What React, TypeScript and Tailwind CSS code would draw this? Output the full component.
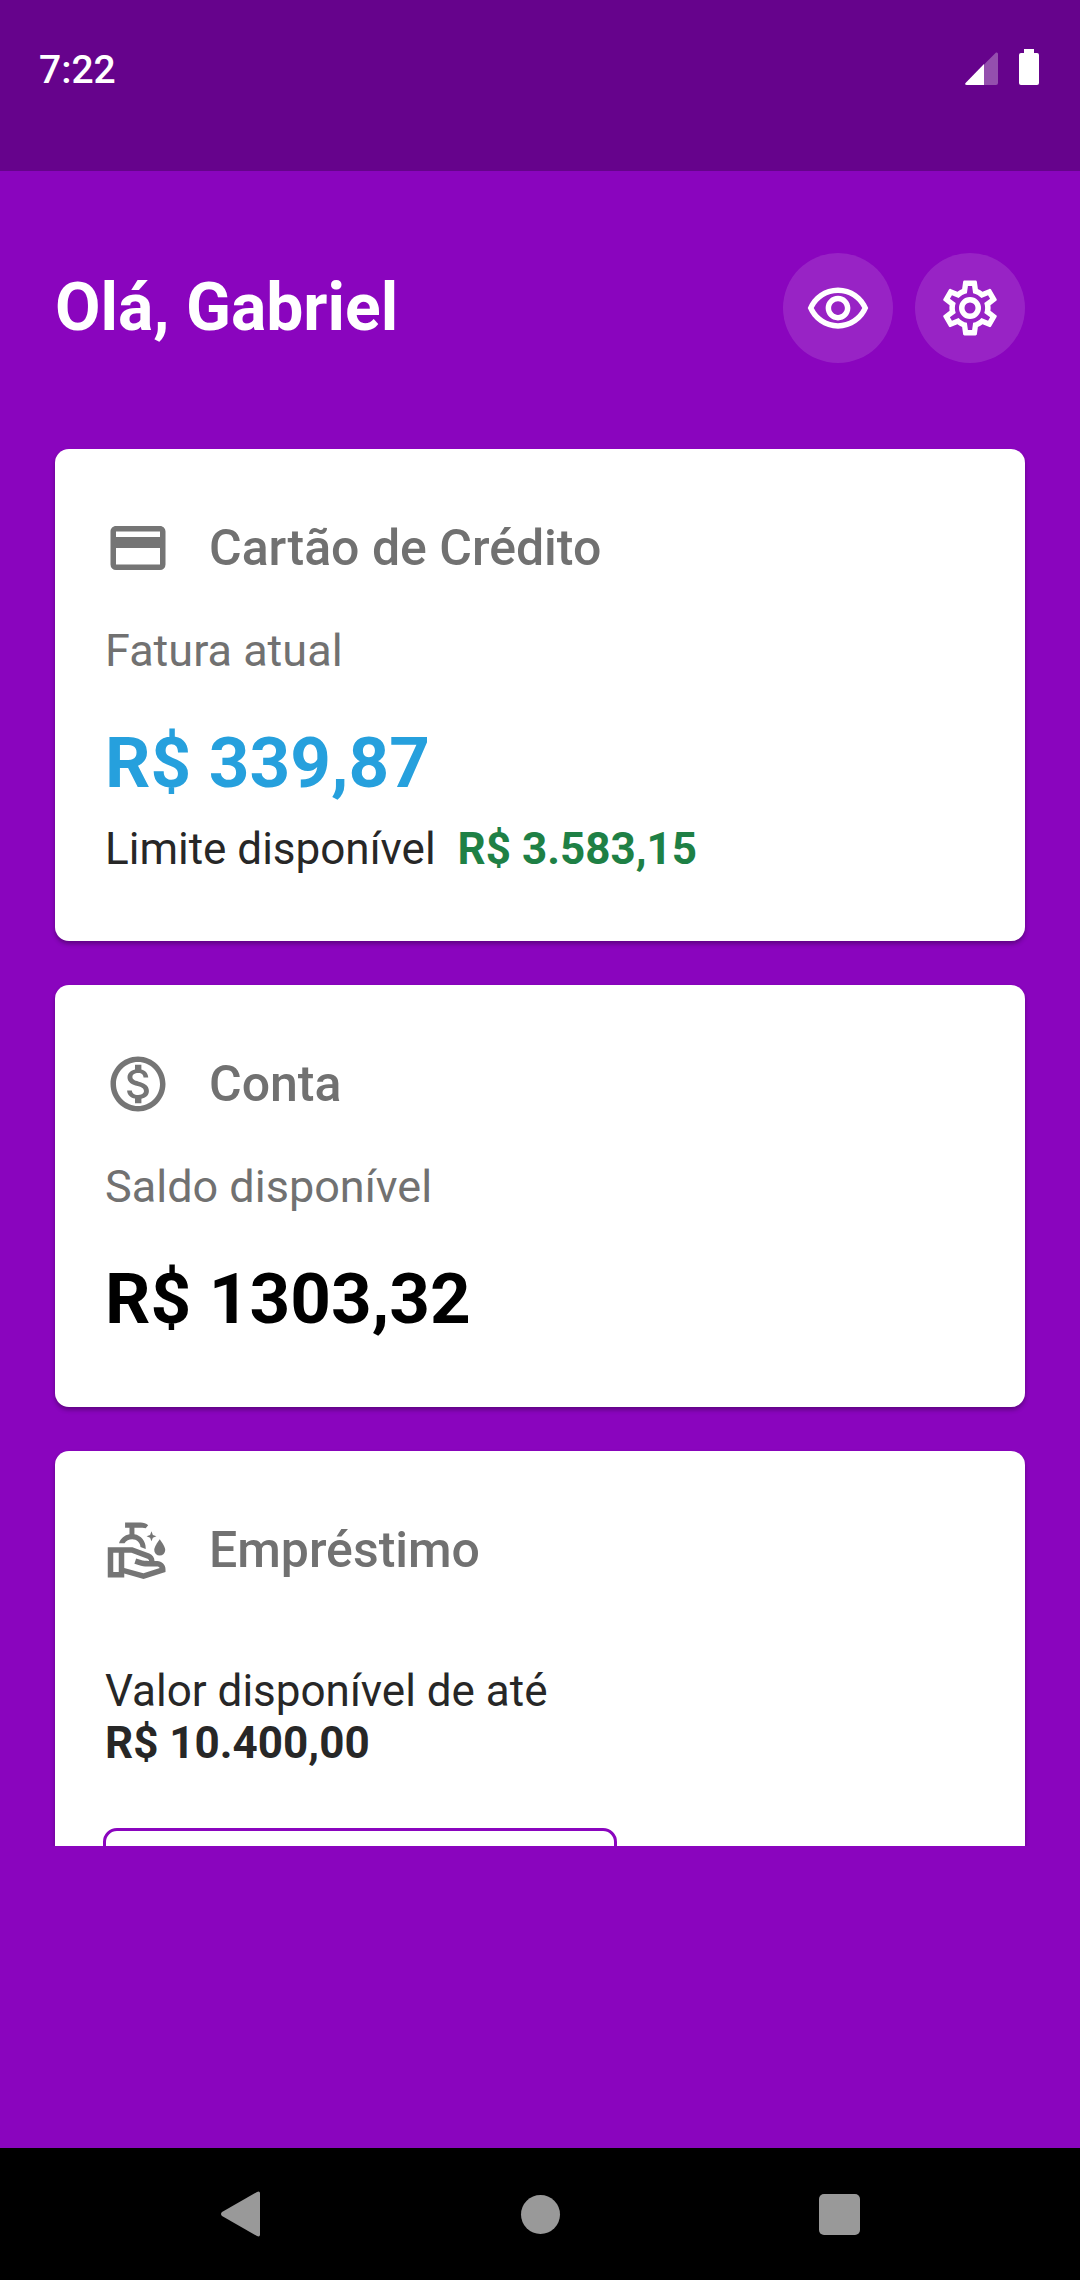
import type { ReactNode } from "react";

function Icon({ children, className = "" }: { children: ReactNode; className?: string }) {
  return (
    <svg viewBox="0 0 24 24" fill="currentColor" aria-hidden="true" className={`size-[66px] shrink-0 ${className}`}>
      {children}
    </svg>
  );
}

const EyeIcon = () => (
  <Icon>
    <path d="M12 6.5c3.79 0 7.17 2.13 8.82 5.5-1.65 3.37-5.03 5.5-8.82 5.5s-7.17-2.13-8.82-5.5C4.83 8.63 8.21 6.5 12 6.5m0-2C7 4.5 2.73 7.61 1 12c1.73 4.39 6 7.5 11 7.5s9.27-3.11 11-7.5c-1.73-4.39-6-7.5-11-7.5zm0 5c1.38 0 2.5 1.12 2.5 2.5s-1.12 2.5-2.5 2.5-2.5-1.12-2.5-2.5 1.12-2.5 2.5-2.5m0-2c-2.48 0-4.5 2.02-4.5 4.5s2.02 4.5 4.5 4.5 4.5-2.02 4.5-4.5-2.02-4.5-4.5-4.5z" />
  </Icon>
);

const CogIcon = () => (
  <Icon>
    <path d="M12,8A4,4 0 0,1 16,12A4,4 0 0,1 12,16A4,4 0 0,1 8,12A4,4 0 0,1 12,8M12,10A2,2 0 0,0 10,12A2,2 0 0,0 12,14A2,2 0 0,0 14,12A2,2 0 0,0 12,10M10,22C9.75,22 9.54,21.82 9.5,21.58L9.13,18.93C8.5,18.68 7.96,18.34 7.44,17.94L4.95,18.95C4.73,19.03 4.46,18.95 4.34,18.73L2.34,15.27C2.21,15.05 2.27,14.78 2.46,14.63L4.57,12.97L4.5,12L4.57,11L2.46,9.37C2.27,9.22 2.21,8.95 2.34,8.73L4.34,5.27C4.46,5.05 4.73,4.96 4.95,5.05L7.44,6.05C7.96,5.66 8.5,5.32 9.13,5.07L9.5,2.42C9.54,2.18 9.75,2 10,2H14C14.25,2 14.46,2.18 14.5,2.42L14.87,5.07C15.5,5.32 16.04,5.66 16.56,6.05L19.05,5.05C19.27,4.96 19.54,5.05 19.66,5.27L21.66,8.73C21.79,8.95 21.73,9.22 21.54,9.37L19.43,11L19.5,12L19.43,13L21.54,14.63C21.73,14.78 21.79,15.05 21.66,15.27L19.66,18.73C19.54,18.95 19.27,19.04 19.05,18.95L16.56,17.95C16.04,18.34 15.5,18.68 14.87,18.93L14.5,21.58C14.46,21.82 14.25,22 14,22H10M11.25,4L10.88,6.61C9.68,6.86 8.62,7.5 7.85,8.39L5.44,7.35L4.69,8.65L6.8,10.2C6.4,11.37 6.4,12.64 6.8,13.8L4.68,15.36L5.43,16.66L7.86,15.62C8.63,16.5 9.68,17.14 10.87,17.38L11.24,20H12.76L13.13,17.39C14.32,17.14 15.37,16.5 16.14,15.62L18.57,16.66L19.32,15.36L17.2,13.81C17.6,12.64 17.6,11.37 17.2,10.2L19.31,8.65L18.56,7.35L16.15,8.39C15.38,7.5 14.32,6.86 13.12,6.62L12.75,4H11.25Z" />
  </Icon>
);

const CreditCardIcon = () => (
  <Icon className="text-[#757575]">
    <path d="M20,8H4V6H20M20,18H4V12H20M20,4H4C2.89,4 2,4.89 2,6V18A2,2 0 0,0 4,20H20A2,2 0 0,0 22,18V6C22,4.89 21.1,4 20,4Z" />
  </Icon>
);

const MoneyIcon = () => (
  <Icon className="text-[#757575]">
    <path d="M12 2C6.48 2 2 6.48 2 12s4.48 10 10 10 10-4.48 10-10S17.52 2 12 2zm0 18c-4.41 0-8-3.59-8-8s3.59-8 8-8 8 3.59 8 8-3.59 8-8 8zm.31-8.86c-1.77-.45-2.34-.94-2.34-1.67 0-.84.79-1.43 2.1-1.43 1.38 0 1.9.66 1.94 1.64h1.71c-.05-1.34-.87-2.57-2.49-2.97V5H10.9v1.69c-1.51.32-2.72 1.3-2.72 2.81 0 1.79 1.49 2.69 3.66 3.21 1.95.46 2.34 1.15 2.34 1.87 0 .53-.39 1.39-2.1 1.39-1.6 0-2.23-.72-2.32-1.64H8.04c.1 1.7 1.36 2.66 2.86 2.97V19h2.34v-1.67c1.52-.29 2.72-1.16 2.73-2.77-.01-2.2-1.9-2.96-3.66-3.42z" />
  </Icon>
);

const HandWashIcon = () => (
  <Icon className="text-[#757575]">
    {/* hand */}
    <path d="M19 16H18C18 14.8 17.25 13.72 16.13 13.3L9.97 11H1V22H7V20.56L14 22.5L22 20V19C22 17.34 20.66 16 19 16M3 20V13H5V20H3M13.97 20.41L7 18.5V13H9.61L15.43 15.17C15.77 15.3 16 15.63 16 16C16 16 14 15.95 13.7 15.85L11.32 15.06L10.69 16.96L13.07 17.75C13.58 17.92 14.11 18 14.65 18H19C19.39 18 19.74 18.24 19.9 18.57L13.97 20.41Z" />
    {/* soap dispenser */}
    <path d="M7.3 2H13C14 2 15 2.4 15.7 3L14.8 4.1C14.4 4 14 3.9 13.6 3.9H10.7V6.3C13.2 6.7 14.9 8.9 14.8 11.6L12.9 10.9C12.9 9.4 11.5 8.1 9.9 8.1C8.7 8.1 7.7 8.7 7.1 9.5H5.1C5.7 7.8 7.1 6.6 8.9 6.3V3.9H7.3Z" />
    {/* sparkle and drop */}
    <path d="M16.9 5.2L17.4 6.5L18.7 7L17.4 7.5L16.9 8.8L16.4 7.5L15.1 7L16.4 6.5Z" />
    <path d="M19.9 8.1S21.9 10.6 21.9 12A2 2 0 0 1 17.9 12C17.9 10.6 19.9 8.1 19.9 8.1Z" />
  </Icon>
);

function RoundButton({ label, children }: { label: string; children: ReactNode }) {
  return (
    <button
      type="button"
      aria-label={label}
      className="flex size-[110px] items-center justify-center rounded-full bg-white/12 text-white"
    >
      {children}
    </button>
  );
}

function Card({ icon, title, children }: { icon: ReactNode; title: string; children: ReactNode }) {
  return (
    <section className="shrink-0 rounded-[14px] bg-white px-[50px] py-[66px] shadow-[0_3px_4px_rgba(0,0,0,0.3)]">
      <div className="flex items-center gap-[38px]">
        {icon}
        <h2 className="text-[50px] leading-[66px] font-medium text-[#717171]">{title}</h2>
      </div>
      {children}
    </section>
  );
}

export default function App() {
  return (
    <div className="flex h-screen flex-col bg-[#8A05BE] font-[Roboto,sans-serif]">
      <div className="flex h-[171px] shrink-0 items-start justify-between bg-[#66038C] pt-[47px] pr-[41px] pl-[39px] text-white">
        <time className="text-[39px] leading-[46px] font-medium">7:22</time>
        <div className="flex items-end gap-[21px] pt-[2px]">
          <svg viewBox="0 0 33 33" className="size-[33px]" aria-hidden="true">
            <path d="M31 0.6Q33 0 33 2V31Q33 33 31 33H2Q-0.6 32.6 0.6 31Z" fill="#fff" fillOpacity="0.3" />
            <path d="M19 12V33H2Q-0.6 32.6 0.6 31Z" fill="#fff" />
          </svg>
          <svg viewBox="0 0 20 36" className="h-9 w-5" aria-hidden="true">
            <path d="M5 0H15V4H18Q20 4 20 6V34Q20 36 18 36H2Q0 36 0 34V6Q0 4 2 4H5Z" fill="#fff" />
          </svg>
        </div>
      </div>

      <header className="flex shrink-0 items-center justify-between px-[55px] pt-[82px] pb-[86px]">
        <h1 className="text-[66px] leading-[80px] font-bold text-white">Olá, Gabriel</h1>
        <div className="flex gap-[22px]">
          <RoundButton label="Mostrar saldo">
            <EyeIcon />
          </RoundButton>
          <RoundButton label="Configurações">
            <CogIcon />
          </RoundButton>
        </div>
      </header>

      <main className="flex min-h-0 flex-1 flex-col gap-11 overflow-y-auto px-[55px] [scrollbar-width:none]">
        <Card icon={<CreditCardIcon />} title="Cartão de Crédito">
          <p className="mt-11 text-[45px] leading-[52px] text-[#717171]">Fatura atual</p>
          <p className="mt-11 text-[71px] leading-[84px] font-bold text-[#26A0DD]">R$ 339,87</p>
          <p className="mt-[18px] flex gap-[22px] text-[44px] leading-[52px] text-[#272727]">
            Limite disponível
            <strong className="font-bold text-[#1E8045]">R$ 3.583,15</strong>
          </p>
        </Card>

        <Card icon={<MoneyIcon />} title="Conta">
          <p className="mt-11 text-[45px] leading-[52px] text-[#717171]">Saldo disponível</p>
          <p className="mt-11 text-[71px] leading-[84px] font-bold text-black">R$ 1303,32</p>
        </Card>

        <Card icon={<HandWashIcon />} title="Empréstimo">
          <p className="mt-[82px] text-[44px] leading-[52px] text-[#272727]">
            Valor disponível de até
            <strong className="block font-bold">R$ 10.400,00</strong>
          </p>
          <button
            type="button"
            aria-label="Empréstimo"
            className="mt-[59px] -ml-0.5 block h-[110px] w-[514px] rounded-[14px] border-3 border-[#8A05BE]"
          />
        </Card>
      </main>

      <div className="h-[302px] shrink-0" />

      <nav className="flex h-[132px] shrink-0 items-center justify-center gap-[199px] bg-black text-[#999]">
        <button type="button" aria-label="Voltar" className="flex w-[100px] justify-center">
          <svg viewBox="0 0 48 48" className="size-12" fill="currentColor" aria-hidden="true">
            <path d="M40 2Q43 0.600 43 3.500V44.500Q43 47.400 40 46L5 26Q3 24 5 22Z" />
          </svg>
        </button>
        <button type="button" aria-label="Início" className="flex w-[100px] justify-center">
          <span className="size-[39px] rounded-full bg-current" />
        </button>
        <button type="button" aria-label="Recentes" className="flex w-[100px] justify-center">
          <span className="size-[41px] rounded-[5px] bg-current" />
        </button>
      </nav>
    </div>
  );
}
